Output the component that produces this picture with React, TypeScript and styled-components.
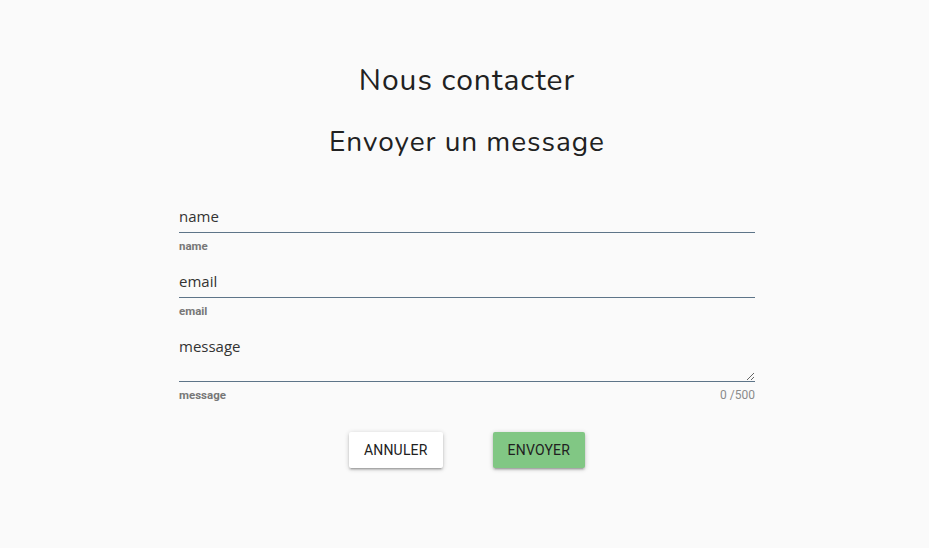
import React from "react";
import styled, { createGlobalStyle } from "styled-components";

const GlobalStyle = createGlobalStyle`
  html, body {
    margin: 0;
    padding: 0;
    background: #fafafa;
  }
  body {
    font-family: "Open Sans", "Noto Sans", sans-serif;
    color: #212121;
  }
  * { box-sizing: border-box; }
`;

const Page = styled.main`
  min-height: 548px;
  padding: 0 0 0 5px;
  display: flex;
  flex-direction: column;
  align-items: center;
`;

const Title = styled.h1`
  margin: 61px 0 0;
  font-family: "Nunito", "Lato", "Open Sans", sans-serif;
  font-weight: 400;
  font-size: 30px;
  line-height: 40px;
  letter-spacing: 1px;
  color: #212121;
`;

const Subtitle = styled.h2`
  margin: 21px 0 0;
  font-family: "Nunito", "Lato", "Open Sans", sans-serif;
  font-weight: 400;
  font-size: 28px;
  line-height: 40px;
  letter-spacing: 0.95px;
  color: #212121;
`;

const Form = styled.form`
  width: 576px;
  margin-top: 36px;
  display: flex;
  flex-direction: column;
`;

const Field = styled.div`
  display: flex;
  flex-direction: column;
  margin-bottom: 10px;
`;

const Input = styled.input`
  width: 100%;
  height: 35px;
  padding: 1px 0 0;
  border: none;
  border-bottom: 1px solid #5d7488;
  background: transparent;
  font-family: "Open Sans", "Noto Sans", sans-serif;
  font-size: 15px;
  color: #333;
  outline: none;
  &::placeholder { color: #333; opacity: 1; }
`;

const TextArea = styled.textarea`
  width: 100%;
  height: 54px;
  padding: 6px 0 0;
  margin: 0;
  display: block;
  border: none;
  border-bottom: 1px solid #5d7488;
  background: transparent;
  font-family: "Open Sans", "Noto Sans", sans-serif;
  font-size: 15px;
  line-height: 24px;
  color: #333;
  outline: none;
  resize: vertical;
  &::placeholder { color: #333; opacity: 1; }
`;

const HintRow = styled.div`
  display: flex;
  justify-content: space-between;
  margin-top: 6px;
  font-family: Roboto, "Liberation Sans", sans-serif;
  font-size: 11.5px;
  line-height: 14px;
`;

const Hint = styled.span`
  font-weight: 700;
  color: #777;
`;

const Counter = styled.span`
  font-size: 12px;
  color: #8a8a8a;
`;

const Actions = styled.div`
  display: flex;
  justify-content: center;
  gap: 50px;
  margin-top: 20px;
`;

const Button = styled.button<{ $primary?: boolean }>`
  height: 36px;
  padding: 0 15px;
  border: none;
  border-radius: 2px;
  background: ${(p) => (p.$primary ? "#81c784" : "#ffffff")};
  color: #212121;
  font-family: Roboto, "Liberation Sans", sans-serif;
  font-size: 14px;
  font-weight: 400;
  text-transform: uppercase;
  letter-spacing: 0.2px;
  box-shadow: 0 2px 2px rgba(0, 0, 0, 0.14), 0 3px 1px -2px rgba(0, 0, 0, 0.12),
    0 1px 5px rgba(0, 0, 0, 0.2);
  cursor: pointer;
`;

export default function App() {
  return (
    <>
      <GlobalStyle />
      <Page>
        <Title>Nous contacter</Title>
        <Subtitle>Envoyer un message</Subtitle>
        <Form onSubmit={(e) => e.preventDefault()}>
          <Field>
            <Input placeholder="name" />
            <HintRow>
              <Hint>name</Hint>
            </HintRow>
          </Field>
          <Field>
            <Input placeholder="email" />
            <HintRow>
              <Hint>email</Hint>
            </HintRow>
          </Field>
          <Field>
            <TextArea placeholder="message" />
            <HintRow>
              <Hint>message</Hint>
              <Counter>0 /500</Counter>
            </HintRow>
          </Field>
          <Actions>
            <Button type="button">Annuler</Button>
            <Button type="submit" $primary>
              Envoyer
            </Button>
          </Actions>
        </Form>
      </Page>
    </>
  );
}
